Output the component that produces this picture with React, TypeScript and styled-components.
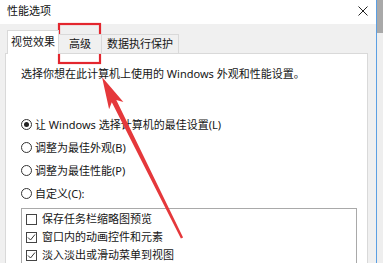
import React from "react";
import styled, { createGlobalStyle } from "styled-components";

const Global = createGlobalStyle`
  html, body { margin: 0; padding: 0; background: #f0f0f0; }
  * { box-sizing: border-box; }
`;

const Stage = styled.div`
  position: relative;
  width: 383px;
  height: 263px;
  overflow: hidden;
  display: flex;
  font-family: "Noto Sans", "Noto Sans CJK SC", sans-serif;
  font-size: 11px;
  color: #151515;
`;

const Window = styled.div`
  width: 377px;
  flex: none;
  display: flex;
  flex-direction: column;
  border-right: 1px solid #5b9fe3;
`;

const Backdrop = styled.div`
  flex: 1;
  display: flex;
  flex-direction: column;
  background: #eeeeee;
`;

const BackdropTop = styled.div`
  height: 33px;
  background: #a9a9a9;
`;

const TitleBar = styled.div`
  height: 24px;
  flex: none;
  background: #fff;
  display: flex;
  align-items: center;
  justify-content: space-between;
  padding: 0 8px 3px 7px;
`;

const Title = styled.span`
  font-size: 11px;
  line-height: 16px;
  color: #111;
`;

const CloseIcon = styled.svg`
  width: 10px;
  height: 10px;
  display: block;
`;

const Body = styled.div`
  flex: 1;
  background: #f0f0f0;
  padding: 6px 8px 0 5px;
  display: flex;
  flex-direction: column;
`;

const TabRow = styled.div`
  display: flex;
  align-items: flex-end;
  height: 24px;
  padding-left: 2px;
  margin-bottom: -1px;
  position: relative;
  z-index: 1;
`;

const Tab = styled.div<{ $active?: boolean; $width: number }>`
  width: ${(p) => p.$width}px;
  height: ${(p) => (p.$active ? 24 : 20)}px;
  margin-left: ${(p) => (p.$active ? 0 : -1)}px;
  border: 1px solid #d9d9d9;
  border-bottom: ${(p) => (p.$active ? "none" : "1px solid #d9d9d9")};
  background: ${(p) => (p.$active ? "#fff" : "#f0f0f0")};
  display: flex;
  align-items: center;
  justify-content: center;
  padding-bottom: ${(p) => (p.$active ? 2 : 0)}px;
  line-height: 16px;
  white-space: nowrap;
`;

const Panel = styled.div`
  flex: 1;
  background: #fff;
  border: 1px solid #d9d9d9;
  border-bottom: none;
  padding: 12px 11px 0 15px;
  display: flex;
  flex-direction: column;
`;

const Description = styled.div`
  line-height: 16px;
  height: 16px;
  white-space: nowrap;
`;

const RadioGroup = styled.div`
  margin-top: 31px;
  display: flex;
  flex-direction: column;
`;

const RadioRow = styled.div`
  height: 23px;
  display: flex;
  align-items: center;
  gap: 3px;
  line-height: 16px;
  white-space: nowrap;
`;

const RadioCircle = styled.span<{ $checked?: boolean }>`
  width: 11px;
  height: 11px;
  flex: none;
  border-radius: 50%;
  border: 1px solid #333;
  background: #fff;
  display: flex;
  align-items: center;
  justify-content: center;
  &::after {
    content: "";
    width: 5px;
    height: 5px;
    border-radius: 50%;
    background: ${(p) => (p.$checked ? "#222" : "transparent")};
  }
`;

const ListBox = styled.div`
  margin-top: 3px;
  width: 336px;
  flex: 1;
  border: 1px solid #a9a9a9;
  border-bottom: none;
  padding: 1px 0 0 4px;
  display: flex;
  flex-direction: column;
`;

const CheckRow = styled.div`
  height: 18px;
  display: flex;
  align-items: center;
  gap: 5px;
  line-height: 16px;
  white-space: nowrap;
`;

const CheckBox = styled.span`
  width: 11px;
  height: 11px;
  flex: none;
  border: 1px solid #444;
  background: #fff;
  display: flex;
  align-items: center;
  justify-content: center;
`;

const CheckMark = styled.svg`
  width: 9px;
  height: 9px;
  display: block;
`;

const Overlay = styled.svg`
  position: absolute;
  left: 0;
  top: 0;
  width: 383px;
  height: 263px;
  pointer-events: none;
`;

const radios = [
  { label: "让 Windows 选择计算机的最佳设置(L)", checked: true },
  { label: "调整为最佳外观(B)" },
  { label: "调整为最佳性能(P)" },
  { label: "自定义(C):" },
];

const checks = [
  { label: "保存任务栏缩略图预览", checked: false },
  { label: "窗口内的动画控件和元素", checked: true },
  { label: "淡入淡出或滑动菜单到视图", checked: true },
];

export default function App() {
  return (
    <>
      <Global />
      <Stage>
        <Window>
          <TitleBar>
            <Title>性能选项</Title>
            <CloseIcon viewBox="0 0 10 10">
              <path d="M0.5 0.5 L9.5 9.5 M9.5 0.5 L0.5 9.5" stroke="#222" strokeWidth="1" fill="none" />
            </CloseIcon>
          </TitleBar>
          <Body>
            <TabRow>
              <Tab $active $width={52}>视觉效果</Tab>
              <Tab $width={44}>高级</Tab>
              <Tab $width={78}>数据执行保护</Tab>
            </TabRow>
            <Panel>
              <Description>选择你想在此计算机上使用的 Windows 外观和性能设置。</Description>
              <RadioGroup>
                {radios.map((r) => (
                  <RadioRow key={r.label}>
                    <RadioCircle $checked={r.checked} />
                    <span>{r.label}</span>
                  </RadioRow>
                ))}
              </RadioGroup>
              <ListBox>
                {checks.map((c) => (
                  <CheckRow key={c.label}>
                    <CheckBox>
                      {c.checked && (
                        <CheckMark viewBox="0 0 9 9">
                          <path d="M1 4.5 L3.5 7 L8 1.5" stroke="#333" strokeWidth="1" fill="none" />
                        </CheckMark>
                      )}
                    </CheckBox>
                    <span>{c.label}</span>
                  </CheckRow>
                ))}
              </ListBox>
            </Panel>
          </Body>
        </Window>
        <Backdrop>
          <BackdropTop />
        </Backdrop>
        <Overlay viewBox="0 0 383 263">
          <rect x="59" y="24" width="41" height="39" fill="none" stroke="#e3262e" strokeWidth="2.2" />
          <polygon
            points="102,77 123.4,102.1 116.3,100.1 183.1,237.4 180.9,238.6 111.8,102.3 109.1,109.2"
            fill="#e5383b"
          />
        </Overlay>
      </Stage>
    </>
  );
}
